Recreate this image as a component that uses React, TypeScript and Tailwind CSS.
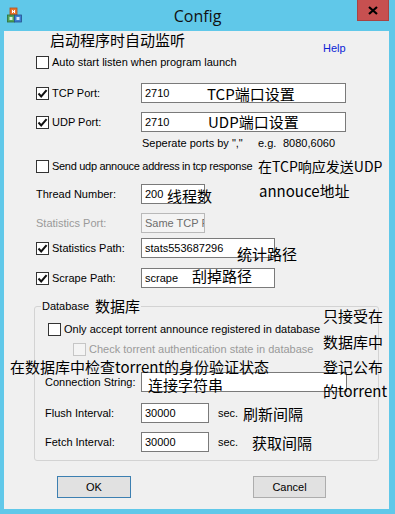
import React from "react";

function CheckBox({ checked = false, disabled = false }: { checked?: boolean; disabled?: boolean }) {
  return (
    <span
      className={`flex w-[13px] h-[13px] shrink-0 items-center justify-center border ${
        disabled ? "border-[#c6c6c6] bg-[#f4f4f4]" : "border-[#333333] bg-white"
      }`}
    >
      {checked && (
        <svg width="11" height="11" viewBox="0 0 11 11">
          <path d="M1.5 5.5 L4.2 8.4 L9.6 2.2" fill="none" stroke="#111" strokeWidth="2" />
        </svg>
      )}
    </span>
  );
}

function TextBox({ value, className = "", disabled = false }: { value: string; className?: string; disabled?: boolean }) {
  return (
    <div
      className={`h-[20px] shrink-0 flex items-center pl-[3px] border overflow-hidden whitespace-nowrap ${
        disabled ? "border-[#b9b9b9] bg-[#f4f4f4] text-[#6d6d6d]" : "border-[#7a7a7a] bg-white text-black"
      } ${className}`}
    >
      {value}
    </div>
  );
}

// pasted-on chinese annotations (they sit over the dialog)
function Note({ className, children }: { className: string; children: React.ReactNode }) {
  return (
    <span
      className={`absolute whitespace-nowrap leading-[18px] text-black font-['Noto_Sans_CJK_SC',sans-serif] ${className}`}
    >
      {children}
    </span>
  );
}

function AppIcon() {
  return (
    <svg width="15" height="16" viewBox="0 0 15 16">
      <rect x="3" y="1" width="7" height="7" fill="#e8742e" stroke="#b24f1a" strokeWidth="0.8" />
      <rect x="5" y="3" width="1" height="3" fill="#fff" />
      <rect x="7" y="3" width="1" height="3" fill="#fff" />
      <rect x="5" y="4" width="3" height="1" fill="#fff" />
      <rect x="0.5" y="8" width="7" height="7" fill="#4fa35a" stroke="#2f6e37" strokeWidth="0.8" />
      <rect x="7.5" y="8" width="7" height="7" fill="#3c7ed0" stroke="#24528f" strokeWidth="0.8" />
      <rect x="2.5" y="10" width="3" height="3" fill="#d9f0dc" />
      <rect x="9.5" y="10" width="3" height="3" fill="#d6e6fa" />
    </svg>
  );
}

export default function App() {
  return (
    <div className="relative w-[395px] h-[514px] bg-[#60c8e9] flex flex-col overflow-hidden font-['Liberation_Sans',Arial,sans-serif] text-[11px] text-black">
      {/* Title bar */}
      <div className="h-[31px] shrink-0 grid grid-cols-[38px_1fr_38px]">
        <div className="pl-[7px] pt-[7px]">
          <AppIcon />
        </div>
        <div className="flex items-center justify-center font-['Open_Sans',sans-serif] text-[16px] text-[#111]">
          Config
        </div>
        <div className="flex justify-end pr-[6px]">
          <div className="w-[32px] h-[21px] bg-[#c75050] border border-[#a84343] border-t-0 flex items-center justify-center">
            <svg width="10" height="9" viewBox="0 0 10 9">
              <path d="M1 1 L9 8 M9 1 L1 8" stroke="#000" strokeWidth="2.2" />
            </svg>
          </div>
        </div>
      </div>

      {/* Client area */}
      <div className="flex-1 ml-[4px] mr-[6px] mb-[5px] bg-[#f0f0f0] flex flex-col pl-[32px]">
        <div className="mt-[10px] h-[14px] flex items-center pl-[287px] text-[#0b24d6]">Help</div>

        <div className="h-[14px] flex items-center gap-[3px]">
          <CheckBox />
          Auto start listen when program launch
        </div>

        <div className="mt-[14px] h-[20px] flex items-center">
          <div className="w-[105px] flex items-center gap-[3px]">
            <CheckBox checked />
            TCP Port:
          </div>
          <TextBox value="2710" className="w-[205px]" />
        </div>

        <div className="mt-[9px] h-[20px] flex items-center">
          <div className="w-[105px] flex items-center gap-[3px]">
            <CheckBox checked />
            UDP Port:
          </div>
          <TextBox value="2710" className="w-[205px]" />
        </div>

        <div className="mt-[4px] h-[14px] flex items-center pl-[106px] whitespace-nowrap">
          <span className="w-[116px]">Seperate ports by ","</span>
          <span className="w-[25px]">e.g.</span>
          <span>8080,6060</span>
        </div>

        <div className="mt-[9px] h-[14px] flex items-center gap-[3px] whitespace-nowrap">
          <CheckBox />
          <span className="tracking-[-0.3px]">Send udp annouce address in tcp response</span>
        </div>

        <div className="mt-[11px] h-[20px] flex items-center">
          <div className="w-[105px]">Thread Number:</div>
          <TextBox value="200" className="w-[64px]" />
        </div>

        <div className="mt-[9px] h-[20px] flex items-center">
          <div className="w-[105px] text-[#9a9a9a]">Statistics Port:</div>
          <TextBox value="Same TCP Port" className="w-[64px]" disabled />
        </div>

        <div className="mt-[5px] h-[20px] flex items-center">
          <div className="w-[105px] flex items-center gap-[3px]">
            <CheckBox checked />
            Statistics Path:
          </div>
          <TextBox value="stats553687296" className="w-[134px]" />
        </div>

        <div className="mt-[10px] h-[20px] flex items-center">
          <div className="w-[105px] flex items-center gap-[3px]">
            <CheckBox checked />
            Scrape Path:
          </div>
          <TextBox value="scrape" className="w-[134px]" />
        </div>

        {/* Database group */}
        <fieldset className="mt-[11px] -ml-[2px] w-[345px] border border-[#d3d3d3] rounded-[3px] pb-[8px]">
          <legend className="ml-[6px] px-[1px] h-[14px] flex items-center">
            <span>Database</span>
            <span className="ml-[6px] text-[15px] leading-[14px] font-['Noto_Sans_CJK_SC',sans-serif]">数据库</span>
          </legend>

          <div className="mt-[9px] h-[14px] flex items-center gap-[3px] pl-[13px] whitespace-nowrap">
            <CheckBox />
            Only accept torrent announce registered in database
          </div>

          <div className="mt-[6px] h-[14px] flex items-center gap-[3px] pl-[38px] whitespace-nowrap text-[#9a9a9a]">
            <CheckBox disabled />
            Check torrent authentication state in database
          </div>

          <div className="mt-[16px] h-[20px] flex items-center pl-[10px]">
            <div className="w-[96px]">Connection String:</div>
            <TextBox value="" className="w-[206px]" />
          </div>

          <div className="mt-[11px] h-[20px] flex items-center pl-[10px]">
            <div className="w-[96px]">Flush Interval:</div>
            <TextBox value="30000" className="w-[68px]" />
            <span className="ml-[9px]">sec.</span>
          </div>

          <div className="mt-[9px] h-[20px] flex items-center pl-[10px]">
            <div className="w-[96px]">Fetch Interval:</div>
            <TextBox value="30000" className="w-[68px]" />
            <span className="ml-[9px]">sec.</span>
          </div>
        </fieldset>

        <div className="mt-[15px] flex items-center pl-[21px]">
          <button className="w-[74px] h-[22px] bg-[#e1e1e1] border border-[#3c7fb1] flex items-center justify-center">
            OK
          </button>
          <button className="ml-[122px] w-[73px] h-[22px] bg-[#e1e1e1] border border-[#adadad] flex items-center justify-center">
            Cancel
          </button>
        </div>
      </div>

      {/* annotations */}
      <Note className="left-[50px] top-[31px] text-[15px]">启动程序时自动监听</Note>
      <Note className="left-[207px] top-[85px] text-[15px]">TCP端口设置</Note>
      <Note className="left-[208px] top-[113px] text-[15px]">UDP端口设置</Note>
      <Note className="left-[258px] top-[157px] text-[14px]">在TCP响应发送UDP</Note>
      <Note className="left-[259px] top-[182px] text-[15px]">annouce地址</Note>
      <Note className="left-[167px] top-[187px] text-[15px]">线程数</Note>
      <Note className="left-[237px] top-[245px] text-[15px]">统计路径</Note>
      <Note className="left-[192px] top-[267px] text-[15px]">刮掉路径</Note>
      <Note className="left-[323px] top-[307px] text-[15px]">只接受在</Note>
      <Note className="left-[323px] top-[333px] text-[15px]">数据库中</Note>
      <Note className="left-[323px] top-[358px] text-[15px]">登记公布</Note>
      <Note className="left-[10px] top-[358px] text-[15px]">在数据库中检查torrent的身份验证状态</Note>
      <Note className="left-[323px] top-[382px] text-[15px]">的torrent</Note>
      <Note className="left-[148px] top-[376px] text-[15px]">连接字符串</Note>
      <Note className="left-[243px] top-[405px] text-[15px]">刷新间隔</Note>
      <Note className="left-[252px] top-[434px] text-[15px]">获取间隔</Note>
    </div>
  );
}
